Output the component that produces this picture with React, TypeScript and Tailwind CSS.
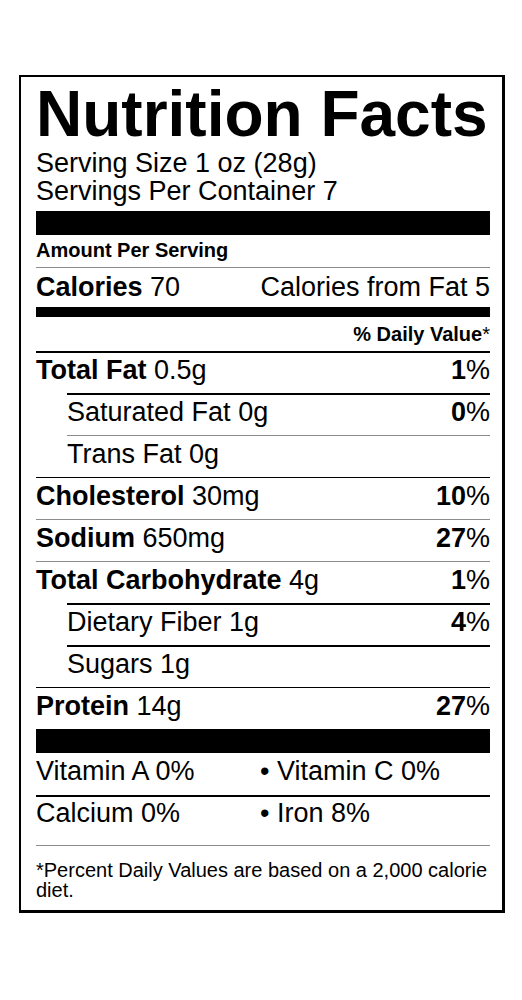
type Line = "thick" | "thin" | "gray";

type Nutrient = {
  label: string;
  amount: string;
  dv?: string;
  indent?: boolean;
  line: Line;
};

const nutrients: Nutrient[] = [
  { label: "Total Fat", amount: "0.5g", dv: "1", line: "thick" },
  { label: "Saturated Fat", amount: "0g", dv: "0", indent: true, line: "thick" },
  { label: "Trans Fat", amount: "0g", indent: true, line: "gray" },
  { label: "Cholesterol", amount: "30mg", dv: "10", line: "thin" },
  { label: "Sodium", amount: "650mg", dv: "27", line: "gray" },
  { label: "Total Carbohydrate", amount: "4g", dv: "1", line: "gray" },
  { label: "Dietary Fiber", amount: "1g", dv: "4", indent: true, line: "thick" },
  { label: "Sugars", amount: "1g", indent: true, line: "thick" },
  { label: "Protein", amount: "14g", dv: "27", line: "thin" },
];

const lineClass: Record<Line, string> = {
  thick: "border-t-2 border-black pt-[2px]",
  thin: "border-t border-black pt-[3px]",
  gray: "border-t border-[#8c8c8c] pt-[3px]",
};

function NutrientRow({ item }: { item: Nutrient }) {
  return (
    <div
      className={`flex h-[42px] items-start justify-between text-[27px] leading-[30px] ${lineClass[item.line]} ${
        item.indent ? "ml-[31px]" : ""
      }`}
    >
      <div>
        {item.indent ? (
          <span>{item.label}</span>
        ) : (
          <span className="font-bold">{item.label}</span>
        )}{" "}
        <span>{item.amount}</span>
      </div>
      {item.dv && (
        <div>
          <span className="font-bold">{item.dv}</span>%
        </div>
      )}
    </div>
  );
}

export default function App() {
  return (
    <div
      className="min-h-[1000px] bg-white pl-[19px] pt-[75px] text-black"
      style={{ fontFamily: '"Liberation Sans", Arial, Helvetica, sans-serif' }}
    >
      <div className="w-[486px] border-2 border-r-[3px] border-b-[3px] border-black pl-[15px] pr-[12px] pt-[5px]">
        <h1 className="text-[64px] font-bold leading-[64px]">Nutrition Facts</h1>
        <div className="mt-[3px] text-[27px] leading-[28px]">
          <p>Serving Size 1 oz (28g)</p>
          <p>Servings Per Container 7</p>
        </div>

        <div className="mt-[6px] h-[24px] bg-black"></div>

        <div className="pb-[5px] pt-[4px] text-[20px] font-bold leading-[23px]">Amount Per Serving</div>

        <div className="flex justify-between border-t border-[#8c8c8c] pb-[5px] pt-[4px] text-[27px] leading-[30px]">
          <div>
            <span className="font-bold">Calories</span> 70
          </div>
          <div>Calories from Fat 5</div>
        </div>

        <div className="h-[10px] bg-black"></div>

        <div className="pb-[5px] pt-[6px] text-right text-[20px] leading-[23px]">
          <span className="font-bold">% Daily Value</span>*
        </div>

        {nutrients.map((item) => (
          <NutrientRow key={item.label} item={item} />
        ))}

        <div className="h-[24px] bg-black"></div>

        <div className="grid grid-cols-[224px_1fr] pb-[9px] pt-[3px] text-[27px] leading-[30px]">
          <div>Vitamin A 0%</div>
          <div>• Vitamin C 0%</div>
        </div>
        <div className="grid grid-cols-[224px_1fr] border-t-2 border-black pb-[17px] pt-[1px] text-[27px] leading-[30px]">
          <div>Calcium 0%</div>
          <div>• Iron 8%</div>
        </div>

        <p className="border-t border-[#8c8c8c] pb-[10px] pt-[14px] text-[20px] leading-[20px]">
          *Percent Daily Values are based on a 2,000 calorie diet.
        </p>
      </div>
    </div>
  );
}
